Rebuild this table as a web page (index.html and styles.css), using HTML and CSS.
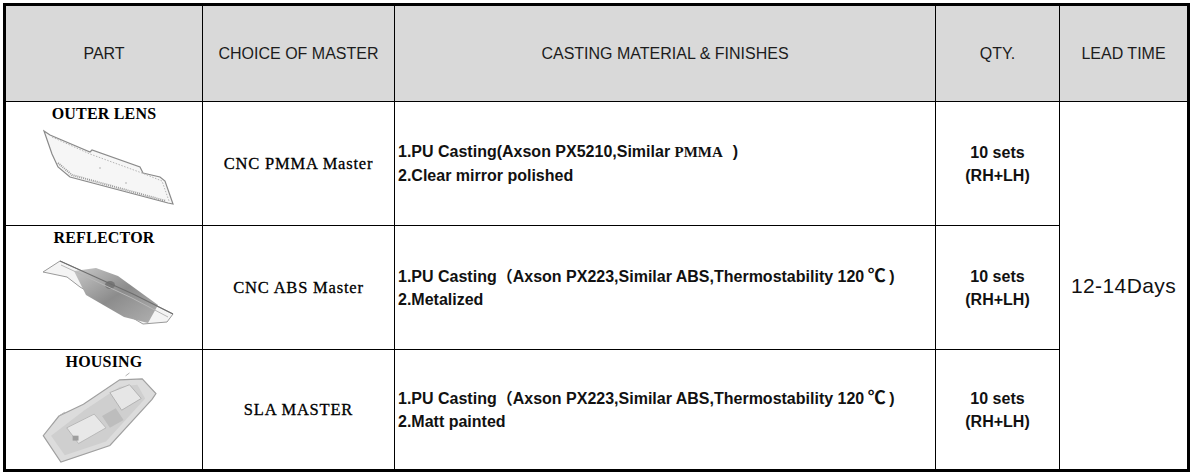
FILE: index.html
```html
<!DOCTYPE html>
<html>
<head>
<meta charset="utf-8">
<link rel="stylesheet" href="styles.css">
</head>
<body>
<div class="sheet">
  <div class="hd">PART</div>
  <div class="hd">CHOICE OF MASTER</div>
  <div class="hd">CASTING MATERIAL &amp; FINISHES</div>
  <div class="hd">QTY.</div>
  <div class="hd">LEAD TIME</div>

  <div class="part">
    <div class="label">OUTER LENS</div>
    <svg class="pic" viewBox="0 0 196 100" width="196" height="100">
      <polygon points="38,8 44,12 84,29 86,27 134,44 137,50 154,54 159,58 167,81 162,80 64,54 52,44 46,31" fill="#f6f6f6" stroke="#8a8a8a" stroke-width="1.2"/>
      <polyline points="46,14 84,31 136,50 156,58 163,78" fill="none" stroke="#b5b5b5" stroke-width="1" stroke-dasharray="1.5 1.5"/>
      <polyline points="52,40 66,52 160,78" fill="none" stroke="#9a9a9a" stroke-width="2" stroke-dasharray="1 1"/>
      <circle cx="94" cy="45" r="0.8" fill="#aaa"/>
      <circle cx="120" cy="60" r="0.8" fill="#aaa"/>
    </svg>
  </div>
  <div class="master">CNC PMMA Master</div>
  <div class="mat">
    <div>1.PU Casting(Axson PX5210,Similar <span class="serif">PMMA</span>)</div>
    <div>2.Clear mirror polished</div>
  </div>
  <div class="qty"><div>10 sets</div><div>(RH+LH)</div></div>
  <div class="lead">12-14Days</div>

  <div class="part">
    <div class="label">REFLECTOR</div>
    <svg class="pic" viewBox="0 0 196 100" width="196" height="100">
      <defs>
        <linearGradient id="rg" x1="0" y1="0" x2="1" y2="1">
          <stop offset="0" stop-color="#c8c8c8"/>
          <stop offset="0.5" stop-color="#8c8c8c"/>
          <stop offset="1" stop-color="#b0b0b0"/>
        </linearGradient>
      </defs>
      <polygon points="37,25 54,14 127,47 167,67 161,75 137,77 74,40 61,30" fill="#f4f4f4" stroke="#9a9a9a" stroke-width="1"/>
      <polygon points="68,24 90,21 112,29 152,58 142,76 118,70 80,48" fill="url(#rg)"/>
      <ellipse cx="104" cy="38" rx="5" ry="4" fill="#777"/>
      <polyline points="54,14 127,47 167,67" fill="none" stroke="#6e6e6e" stroke-width="1.2"/>
      <polyline points="55,18 126,51 162,70" fill="none" stroke="#b8b8b8" stroke-width="1"/>
    </svg>
  </div>
  <div class="master">CNC ABS Master</div>
  <div class="mat">
    <div>1.PU Casting<span class="fw">（</span>Axson PX223,Similar ABS,Thermostability 120<span class="cjk">℃</span>)</div>
    <div>2.Metalized</div>
  </div>
  <div class="qty"><div>10 sets</div><div>(RH+LH)</div></div>

  <div class="part">
    <div class="label">HOUSING</div>
    <svg class="pic" viewBox="0 0 196 100" width="196" height="100">
      <polygon points="36,66 54,93 104,76 147,29 151,23 137,8 114,9 77,34 52,46" fill="#dcdcdc" stroke="#a0a0a0" stroke-width="1.2"/>
      <polygon points="44,66 58,86 100,72 140,28 132,14 114,16 78,40" fill="#cfcfcf"/>
      <polygon points="60,58 88,44 100,58 72,74" fill="#e8e8e8" stroke="#b0b0b0" stroke-width="0.8"/>
      <polygon points="104,22 124,14 136,28 116,40" fill="#e6e6e6" stroke="#a8a8a8" stroke-width="0.8"/>
      <polygon points="96,46 110,38 118,50 104,58" fill="#bdbdbd"/>
      <rect x="66" y="66" width="6" height="5" fill="#9e9e9e"/>
      <polyline points="52,46 58,42" stroke="#b0b0b0" fill="none"/>
      <polyline points="120,5 124,2" stroke="#b0b0b0" fill="none"/>
    </svg>
  </div>
  <div class="master">SLA MASTER</div>
  <div class="mat">
    <div>1.PU Casting<span class="fw">（</span>Axson PX223,Similar ABS,Thermostability 120<span class="cjk">℃</span>)</div>
    <div>2.Matt painted</div>
  </div>
  <div class="qty"><div>10 sets</div><div>(RH+LH)</div></div>
</div>
</body>
</html>
```
FILE: styles.css
```css
html, body {
  margin: 0;
  padding: 0;
  background: #ffffff;
}

.sheet {
  margin: 3px 0 0 3px;
  display: grid;
  grid-template-columns: 196px 191px 540px 123px 127px;
  grid-template-rows: 95px 123px 123px 119px;
  gap: 1px;
  width: max-content;
  background: #000;
  border: 3px solid #000;
  font-family: "Liberation Sans", Arial, "Noto Sans CJK SC", sans-serif;
  color: #111;
}

.sheet > div {
  background: #fff;
}

.sheet > .hd {
  background: #d9d9d9;
  display: flex;
  align-items: center;
  justify-content: center;
  font-size: 16px;
  color: #1c1c1c;
}

.part {
  display: flex;
  flex-direction: column;
  align-items: center;
  padding-top: 3px;
  overflow: hidden;
}

.label {
  font-family: "Liberation Serif", "Times New Roman", serif;
  font-weight: bold;
  font-size: 16px;
  letter-spacing: 0.2px;
  line-height: 18px;
  color: #000;
}

.pic {
  display: block;
}

.master {
  display: flex;
  align-items: center;
  justify-content: center;
  font-family: "Liberation Serif", "Times New Roman", serif;
  font-size: 16.5px;
  letter-spacing: 0.8px;
  color: #000;
  -webkit-text-stroke: 0.3px #000;
}

.mat {
  display: flex;
  flex-direction: column;
  justify-content: center;
  padding-left: 3px;
  font-weight: bold;
  font-size: 16px;
  line-height: 23px;
  color: #111;
  font-family: "Liberation Sans", Arial, "Noto Sans CJK SC", sans-serif;
}

.serif {
  font-family: "Liberation Serif", "Times New Roman", serif;
  font-weight: bold;
  font-size: 15px;
  padding-right: 10px;
}

.fw {
  font-family: "Noto Sans CJK SC", sans-serif;
  line-height: 14px;
}

.cjk {
  display: inline-block;
  width: 25px;
  text-align: center;
  font-family: "Noto Sans CJK SC", sans-serif;
  font-weight: bold;
  font-size: 18px;
  line-height: 14px;
}

.qty {
  display: flex;
  flex-direction: column;
  align-items: center;
  justify-content: center;
  font-weight: bold;
  font-size: 16px;
  line-height: 23px;
}

.sheet > .lead {
  grid-column: 5;
  grid-row: 2 / span 3;
  display: flex;
  align-items: center;
  justify-content: center;
  font-size: 21px;
  letter-spacing: 0.4px;
  color: #111;
}
```
